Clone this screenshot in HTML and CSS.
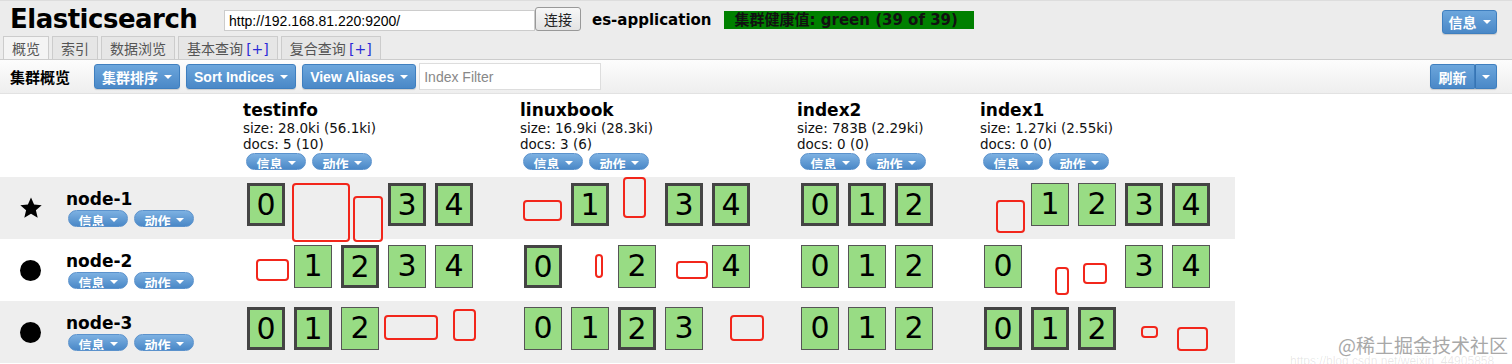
FILE: index.html
```html
<!DOCTYPE html>
<html lang="zh-CN">
<head>
<meta charset="UTF-8">
<title>Elasticsearch Head</title>
<link rel="stylesheet" href="styles.css">
</head>
<body>
<div class="masthead">
    <div class="topbar">
        <h1 class="logo">Elasticsearch</h1>
        <input class="url" type="text" value="http://192.168.81.220:9200/">
        <button class="connect">连接</button>
        <span class="cluster-name">es-application</span>
        <span class="health">集群健康值: green (39 of 39)</span>
        <button class="btn info-btn">信息 <i class="caret"></i></button>
    </div>
    <div class="tabs">
        <div class="tab active">概览</div>
        <div class="tab">索引</div>
        <div class="tab">数据浏览</div>
        <div class="tab">基本查询 <span class="plus">[+]</span></div>
        <div class="tab">复合查询 <span class="plus">[+]</span></div>
    </div>
</div>

<div class="toolbar">
    <span class="toolbar-title">集群概览</span>
    <button class="btn">集群排序 <i class="caret"></i></button>
    <button class="btn">Sort Indices <i class="caret"></i></button>
    <button class="btn">View Aliases <i class="caret"></i></button>
    <input class="filter" type="text" placeholder="Index Filter">
    <div class="refresh">
        <button class="btn refresh-btn">刷新</button>
        <button class="btn refresh-drop"><i class="caret"></i></button>
    </div>
</div>

<div class="overview">
    <div class="row head">
        <div class="cell node-col"></div>
        <div class="cell col-a">
            <div class="idx-name">testinfo</div>
            <div class="idx-stat">size: 28.0ki (56.1ki)</div>
            <div class="idx-stat">docs: 5 (10)</div>
            <div class="pills"><span class="pill">信息 <i class="caret"></i></span><span class="pill">动作 <i class="caret"></i></span></div>
        </div>
        <div class="cell col-a">
            <div class="idx-name">linuxbook</div>
            <div class="idx-stat">size: 16.9ki (28.3ki)</div>
            <div class="idx-stat">docs: 3 (6)</div>
            <div class="pills"><span class="pill">信息 <i class="caret"></i></span><span class="pill">动作 <i class="caret"></i></span></div>
        </div>
        <div class="cell col-b">
            <div class="idx-name">index2</div>
            <div class="idx-stat">size: 783B (2.29ki)</div>
            <div class="idx-stat">docs: 0 (0)</div>
            <div class="pills"><span class="pill">信息 <i class="caret"></i></span><span class="pill">动作 <i class="caret"></i></span></div>
        </div>
        <div class="cell col-c">
            <div class="idx-name">index1</div>
            <div class="idx-stat">size: 1.27ki (2.55ki)</div>
            <div class="idx-stat">docs: 0 (0)</div>
            <div class="pills"><span class="pill">信息 <i class="caret"></i></span><span class="pill">动作 <i class="caret"></i></span></div>
        </div>
    </div>

    <!-- node-1 (master) -->
    <div class="row node gray">
        <div class="cell node-col">
            <svg class="node-icon" viewBox="0 0 24 24"><path d="M12 1.5l3.1 7.1 7.6.6-5.8 5 1.8 7.5L12 17.7l-6.7 4 1.8-7.5-5.8-5 7.6-.6z" fill="#000"/></svg>
            <div class="node-info">
                <div class="node-name">node-1</div>
                <div class="pills"><span class="pill">信息 <i class="caret"></i></span><span class="pill">动作 <i class="caret"></i></span></div>
            </div>
        </div>
        <div class="cell col-a shards"><span class="shard primary">0</span><span class="slot"></span><span class="slot"></span><span class="shard primary">3</span><span class="shard primary">4</span></div>
        <div class="cell col-a shards"><span class="slot"></span><span class="shard primary">1</span><span class="slot"></span><span class="shard primary">3</span><span class="shard primary">4</span></div>
        <div class="cell col-b shards"><span class="shard primary">0</span><span class="shard primary">1</span><span class="shard primary">2</span></div>
        <div class="cell col-c shards"><span class="slot"></span><span class="shard">1</span><span class="shard">2</span><span class="shard primary">3</span><span class="shard primary">4</span></div>
    </div>

    <!-- node-2 -->
    <div class="row node">
        <div class="cell node-col">
            <span class="node-icon dot"></span>
            <div class="node-info">
                <div class="node-name">node-2</div>
                <div class="pills"><span class="pill">信息 <i class="caret"></i></span><span class="pill">动作 <i class="caret"></i></span></div>
            </div>
        </div>
        <div class="cell col-a shards"><span class="slot"></span><span class="shard">1</span><span class="shard primary">2</span><span class="shard">3</span><span class="shard">4</span></div>
        <div class="cell col-a shards"><span class="shard primary">0</span><span class="slot"></span><span class="shard">2</span><span class="slot"></span><span class="shard">4</span></div>
        <div class="cell col-b shards"><span class="shard">0</span><span class="shard">1</span><span class="shard">2</span></div>
        <div class="cell col-c shards"><span class="shard">0</span><span class="slot"></span><span class="slot"></span><span class="shard">3</span><span class="shard">4</span></div>
    </div>

    <!-- node-3 -->
    <div class="row node gray">
        <div class="cell node-col">
            <span class="node-icon dot"></span>
            <div class="node-info">
                <div class="node-name">node-3</div>
                <div class="pills"><span class="pill">信息 <i class="caret"></i></span><span class="pill">动作 <i class="caret"></i></span></div>
            </div>
        </div>
        <div class="cell col-a shards"><span class="shard primary">0</span><span class="shard primary">1</span><span class="shard">2</span></div>
        <div class="cell col-a shards"><span class="shard">0</span><span class="shard">1</span><span class="shard primary">2</span><span class="shard">3</span></div>
        <div class="cell col-b shards"><span class="shard">0</span><span class="shard">1</span><span class="shard">2</span></div>
        <div class="cell col-c shards"><span class="shard primary">0</span><span class="shard primary">1</span><span class="shard primary">2</span></div>
    </div>
</div>

<!-- hand-drawn red marks over the screenshot -->
<div class="marks">
    <span class="mark m1"></span><span class="mark m2"></span><span class="mark m3"></span>
    <span class="mark m4"></span><span class="mark m5"></span><span class="mark m6"></span>
    <span class="mark m7"></span><span class="mark m8"></span><span class="mark m9"></span>
    <span class="mark m10"></span><span class="mark m11"></span><span class="mark m12"></span>
    <span class="mark m13"></span><span class="mark m14"></span><span class="mark m15"></span>
</div>
<div class="watermark">@稀土掘金技术社区</div>
<div class="watermark-url">https://blog.csdn.net/weixin_44905858</div>
</body>
</html>
```

FILE: styles.css
```css
body {
    margin: 0;
    padding: 0;
    background-color: #fff;
    font-family: "DejaVu Sans", "Noto Sans CJK SC", sans-serif;
    color: #000;
    position: relative;
    height: 364px;
    overflow: hidden;
}
.masthead {
    background-color: #ececec;
    border-top: 1px solid #ddd;
}
.topbar {
    display: flex;
    align-items: center;
    height: 35px;
    padding: 0 15px 0 10px;
}
.logo {
    margin: 0;
    font-size: 26px;
    letter-spacing: -0.5px;
    font-weight: bold;
    line-height: 30px;
    width: 214px;
}
.url {
    width: 311px;
    height: 21px;
    box-sizing: border-box;
    border: 1px solid #ccc;
    padding: 0 4px;
    font: 14px "Liberation Sans", sans-serif;
    color: #000;
    background: #fff;
    margin-top: 4px;
}
.connect {
    width: 46px;
    height: 24px;
    border: 1px solid #999;
    border-radius: 3px;
    background: linear-gradient(#f7f7f7, #e3e3e3);
    font: 14px "Noto Sans CJK SC", sans-serif;
    color: #222;
    padding: 0;
    margin-top: 1px;
}
.cluster-name {
    font-weight: bold;
    font-size: 15px;
    margin-left: 11px;
    margin-top: 2px;
}
.health {
    margin-left: 12px;
    width: 250px;
    height: 18px;
    box-sizing: border-box;
    padding-left: 11px;
    background-color: #008000;
    color: #111;
    font-weight: bold;
    font-size: 15px;
    line-height: 18px;
    margin-top: 2px;
}
.btn {
    border: 1px solid #3f7fbf;
    border-radius: 3px;
    background: linear-gradient(#6ca6dc, #4a88c7);
    color: #fff;
    font: bold 14px "Liberation Sans", "Noto Sans CJK SC", sans-serif;
    height: 25px;
    padding: 0 7px;
    display: inline-flex;
    align-items: center;
    justify-content: center;
    gap: 6px;
    white-space: nowrap;
    box-shadow: 0 1px 1px rgba(0, 0, 0, 0.15);
}
.info-btn {
    margin-left: auto;
    width: 55px;
    height: 24px;
    margin-top: 7px;
    padding: 0;
}
.caret {
    display: inline-block;
    width: 0;
    height: 0;
    border-left: 4px solid transparent;
    border-right: 4px solid transparent;
    border-top: 4px solid #fff;
}
.tabs {
    display: flex;
    gap: 3px;
    padding-left: 3px;
    height: 23px;
    border-bottom: 1px solid #ccc;
}
.tab {
    border: 1px solid #ccc;
    border-bottom: none;
    background-color: #e6e6e6;
    padding: 0 8px;
    font: 14px "Noto Sans CJK SC", sans-serif;
    line-height: 23px;
    color: #555;
}
.tab.active {
    background-color: #f4f4f4;
}
.plus {
    font-family: "DejaVu Sans", sans-serif;
    color: #2b2bd6;
}
.toolbar {
    display: flex;
    align-items: center;
    height: 33px;
    padding: 0 15px 0 10px;
    background: linear-gradient(#fdfdfd, #eeeeee);
    border-bottom: 1px solid #e2e2e2;
}
.toolbar-title {
    font: bold 15px "Noto Sans CJK SC", sans-serif;
    width: 84px;
}
.toolbar .btn {
    margin-right: 6px;
}
.filter {
    width: 182px;
    height: 27px;
    box-sizing: border-box;
    border: 1px solid #ddd;
    padding: 0 4px;
    font: 14px "Liberation Sans", sans-serif;
    margin-left: -3px;
}
.filter::placeholder {
    color: #888;
}
.refresh {
    margin-left: auto;
    display: flex;
}
.toolbar .refresh .btn {
    margin-right: 0;
}
.refresh-btn {
    width: 45px;
    padding: 0;
    border-radius: 3px 0 0 3px;
}
.refresh-drop {
    width: 22px;
    border-radius: 0 3px 3px 0;
    border-left-color: #3674b4;
    padding: 0;
}

/* cluster overview */
.overview {
    width: 1235px;
}
.row {
    display: flex;
}
.row.head {
    height: 83px;
    padding-top: 6px;
    box-sizing: border-box;
}
.row.node {
    height: 62px;
}
.row.gray {
    background-color: #eee;
}
.node-col {
    width: 243px;
    display: flex;
    align-items: center;
    padding-left: 19px;
    box-sizing: border-box;
}
.col-a {
    width: 277px;
}
.col-b {
    width: 183px;
}
.col-c {
    width: 255px;
}
.idx-name {
    font-weight: bold;
    font-size: 17px;
    line-height: 20px;
}
.idx-stat {
    font-size: 13.5px;
    line-height: 16px;
    color: #111;
}
.pills {
    display: flex;
    gap: 6px;
    margin-left: 3px;
    margin-top: 1px;
}
.pill {
    display: inline-flex;
    justify-content: center;
    gap: 5px;
    width: 60px;
    height: 17px;
    overflow: hidden;
    box-sizing: border-box;
    border-radius: 9px;
    background: linear-gradient(#7db1e2, #4a88c7);
    border: 1px solid #5b92cc;
    color: #fff;
    font: bold 13px "Noto Sans CJK SC", sans-serif;
    line-height: 20px;
}
.pill .caret {
    margin-top: 7px;
}
.node-icon {
    width: 24px;
    height: 24px;
    margin-right: 23px;
    flex: none;
}
.node-icon.dot {
    width: 21px;
    height: 21px;
    border-radius: 50%;
    background-color: #000;
    margin-left: 1px;
    margin-right: 25px;
}
.node-name {
    font-weight: bold;
    font-size: 17px;
    line-height: 20px;
}
.node-info .pills {
    margin-left: 2px;
}
.shards {
    display: flex;
    gap: 9px;
    padding: 6px 0 0 4px;
    box-sizing: border-box;
    align-items: flex-start;
}
.shard, .slot {
    width: 38px;
    height: 43px;
    box-sizing: border-box;
    flex: none;
}
.shard {
    background-color: #98dc84;
    border: 1.5px solid #555;
    font-size: 30px;
    line-height: 40px;
    text-align: center;
    color: #000;
}
.shard.primary {
    border: 3px solid #444;
    line-height: 37px;
}

/* red annotation marks */
.mark {
    position: absolute;
    border: 2.5px solid #f2261b;
    border-radius: 4px;
    box-sizing: border-box;
}
.m1 { left: 292px; top: 183px; width: 58px; height: 59px; }
.m2 { left: 353px; top: 196px; width: 30px; height: 46px; }
.m3 { left: 523px; top: 200px; width: 39px; height: 21px; }
.m4 { left: 623px; top: 177px; width: 23px; height: 41px; }
.m5 { left: 996px; top: 200px; width: 29px; height: 33px; }
.m6 { left: 256px; top: 259px; width: 33px; height: 22px; }
.m7 { left: 595px; top: 254px; width: 8px; height: 24px; }
.m8 { left: 676px; top: 261px; width: 32px; height: 18px; }
.m9 { left: 1055px; top: 267px; width: 14px; height: 28px; }
.m10 { left: 1083px; top: 263px; width: 24px; height: 21px; }
.m11 { left: 384px; top: 315px; width: 54px; height: 25px; }
.m12 { left: 453px; top: 309px; width: 23px; height: 32px; }
.m13 { left: 730px; top: 315px; width: 34px; height: 26px; }
.m14 { left: 1141px; top: 326px; width: 17px; height: 12px; }
.m15 { left: 1177px; top: 327px; width: 31px; height: 24px; }

.watermark {
    position: absolute;
    left: 1338px;
    top: 331px;
    font: 19px "Noto Sans CJK SC", sans-serif;
    color: #a8a8a8;
    text-shadow: 0 0 2px #fff;
}
.watermark-url {
    position: absolute;
    left: 1290px;
    top: 354px;
    font: 12px "Liberation Sans", sans-serif;
    color: rgba(0, 0, 0, 0.1);
    white-space: nowrap;
}
```
